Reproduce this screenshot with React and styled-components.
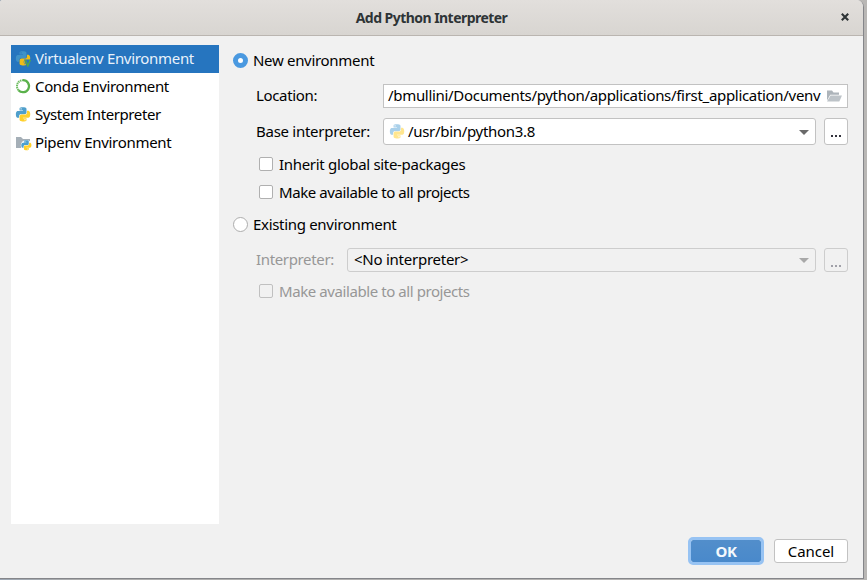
import React from 'react';
import styled, { createGlobalStyle, css } from 'styled-components';

const GlobalStyle = createGlobalStyle`
  * { box-sizing: border-box; }
  body {
    margin: 0;
    overflow: hidden;
    background: #b9b7b5;
    font-family: "Noto Sans", "Open Sans", sans-serif;
    font-size: 15px;
    color: #000;
  }
  svg { display: block; flex: none; }
`;

const Desktop = styled.div`
  width: 867px;
  height: 580px;
  background: linear-gradient(90deg, #9da7b3 0, #aeaeae 78px, #b9b7b5 100%);
`;

const Dialog = styled.div`
  width: 864px;
  height: 579px;
  display: flex;
  flex-direction: column;
  background: #f1f1f1;
  border: solid #85868a;
  border-width: 0 1px 1px 0;
  border-radius: 3px 7px 0 0;
  overflow: hidden;
`;

const TitleBar = styled.header`
  height: 36px;
  flex: none;
  display: grid;
  grid-template-columns: 36px 1fr 36px;
  align-items: center;
  justify-items: center;
  background: linear-gradient(#e2dfdc, #d8d5d1);
  border-bottom: 1px solid #bab5b0;
  color: #2e3436;
`;

const Title = styled.h1`
  grid-column: 2;
  margin: 1px 0 0;
  font-size: 14px;
  line-height: 20px;
  font-weight: 700;
  white-space: nowrap;
  letter-spacing: -0.54px;
`;

const Text = styled.span`
  white-space: nowrap;
  line-height: 20px;
  letter-spacing: ${p => p.$track ?? -0.31}px;
  padding-bottom: ${p => (p.$raised ? 2 : 0)}px;
`;

const Body = styled.main`
  flex: 1;
  display: flex;
  gap: 14px;
  padding: 9px 15px 0 11px;
`;

const EnvList = styled.nav`
  width: 208px;
  flex: none;
  height: 479px;
  background: #fff;
`;

const EnvItem = styled.div`
  height: 28px;
  display: flex;
  align-items: center;
  gap: 3px;
  padding: 0 4px 0 4px;
  ${p => p.$selected && css`background: #2675bf; color: #e9f2fb;`}
`;

const Form = styled.section`
  flex: 1;
  min-width: 0;
  display: flex;
  flex-direction: column;
  padding-top: 5px;
`;

const RadioRow = styled.label`
  height: 22px;
  margin-top: ${p => p.$top || 0}px;
  display: flex;
  align-items: center;
  gap: 5px;
`;

const RadioDot = styled.span`
  width: 15px;
  height: 15px;
  margin-bottom: ${p => (p.$on ? 1 : 0)}px;
  border-radius: 50%;
  border: ${p => (p.$on ? '5px solid #4a99e0' : '1px solid #adadad')};
  background: #fff;
`;

const FieldRow = styled.div`
  height: ${p => p.$h}px;
  margin-top: ${p => p.$top}px;
  display: flex;
  align-items: center;
  padding-left: 23px;
  color: ${p => (p.$off ? '#979797' : 'inherit')};
`;

const FieldLabel = styled.div`
  width: ${p => p.$w}px;
  flex: none;
  display: flex;
`;

const TextField = styled.div`
  flex: 1;
  height: 24px;
  display: flex;
  align-items: center;
  justify-content: space-between;
  padding: 0 5px 0 4px;
  background: #fff;
  border: 1px solid #c2c2c2;
`;

const Combo = styled.div`
  flex: 1;
  height: 100%;
  display: flex;
  align-items: center;
  gap: 2px;
  padding: 0 6px 0 ${p => (p.$off ? 6 : 5)}px;
  border-radius: 3px;
  background: ${p => (p.$off ? '#f1f1f1' : '#fff')};
  border: 1px solid ${p => (p.$off ? '#cdcdcd' : '#c2c2c2')};
  color: #000;
`;

const Arrow = styled.span`
  margin-left: auto;
  margin-top: 1px;
  border: 5px solid transparent;
  border-top-color: ${p => (p.$off ? '#a8a8a8' : '#6a6a6a')};
  border-bottom: 0;
`;

const MoreButton = styled.button`
  width: 24px;
  height: 100%;
  margin-left: 8px;
  padding: ${p => (p.$off ? 11 : 9)}px 0 0;
  display: flex;
  justify-content: center;
  align-items: center;
  gap: 2px;
  border-radius: 3px;
  background: ${p => (p.$off ? '#f1f1f1' : '#fff')};
  border: 1px solid ${p => (p.$off ? '#cdcdcd' : '#c2c2c2')};
  color: ${p => (p.$off ? '#a0a0a8' : '#33333d')};
`;

const Dot = styled.i`
  width: 2px;
  height: 2px;
  background: currentColor;
`;

const CheckRow = styled.label`
  height: 20px;
  margin-top: ${p => p.$top}px;
  padding-left: 26px;
  display: flex;
  align-items: center;
  gap: 6px;
  color: ${p => (p.$off ? '#979797' : 'inherit')};
`;

const Box = styled.span`
  width: 14px;
  height: 14px;
  border-radius: 2px;
  border: 1px solid ${p => (p.$off ? '#c0c0c0' : '#b0b0b0')};
  background: ${p => (p.$off ? '#f1f1f1' : '#fff')};
`;

const Footer = styled.footer`
  height: 42px;
  flex: none;
  display: flex;
  justify-content: flex-end;
  align-items: flex-start;
  gap: 10px;
  padding-right: 15px;
`;

const DialogButton = styled.button`
  width: 74px;
  height: 24px;
  margin-top: 3px;
  padding: 0;
  font: inherit;
  color: #000;
  background: #fff;
  border: 1px solid #c2c2c2;
  border-radius: 3px;
  display: flex;
  align-items: center;
  justify-content: center;
  ${p => p.$primary && css`
    width: 76px;
    height: 28px;
    margin-top: 1px;
    border: 3px solid #97c3f3;
    border-radius: 5px;
    background: linear-gradient(#528ecb, #4989cb) padding-box;
    color: #f4f8fc;
    font-weight: 700;
  `}
`;

const SNAKE = 'M14.25.18l.9.2.73.26.59.3.45.32.34.34.25.34.16.33.1.3.04.26.02.2-.01.13V8.5l-.05.63-.13.55-.21.46-.26.38-.3.31-.33.25-.35.19-.35.14-.33.1-.3.07-.26.04-.21.02H8.77l-.69.05-.59.14-.5.22-.41.27-.33.32-.27.35-.2.36-.15.37-.1.35-.07.32-.04.27-.02.21v3.06H3.17l-.21-.03-.28-.07-.32-.12-.35-.18-.36-.26-.36-.36-.35-.46-.32-.59-.28-.73-.21-.88-.14-1.05-.05-1.23.06-1.22.16-1.04.24-.87.32-.71.36-.57.4-.44.42-.33.42-.24.4-.16.36-.1.32-.05.24-.01h.16l.06.01h8.16v-.83H6.18l-.01-2.75-.02-.37.05-.34.11-.31.17-.28.25-.26.31-.23.38-.2.44-.18.51-.15.58-.12.64-.1.71-.06.77-.04.84-.02 1.27.05zm-6.3 1.98l-.23.33-.08.41.08.41.23.34.33.22.41.09.41-.09.33-.22.23-.34.08-.41-.08-.41-.23-.33-.33-.22-.41-.09-.41.09z';

function Snakes({ blue, yellow, transform }) {
  return (
    <g transform={transform}>
      <path d={SNAKE} fill={blue} />
      <path d={SNAKE} fill={yellow} transform="rotate(180 12 12)" />
    </g>
  );
}

function PythonIcon({ faded, badge }) {
  const blue = faded ? '#a9d0ea' : badge ? '#3f92c8' : '#4f9fcb';
  const yellow = faded ? '#ffe68f' : badge ? '#efbd17' : '#ffd02b';
  return (
    <svg width="17" height="16" viewBox="0 0 17 16">
      <Snakes blue={blue} yellow={yellow} transform="translate(.9 .2) scale(.595)" />
      {badge && (
        <>
          <path d="M9 8.500h8V16h-5z" fill="#2675bf" />
          <path d="M10.300 9l2.500 5.800 2.500-5.800" fill="none" stroke="#4da64d" strokeWidth="1.500" />
        </>
      )}
    </svg>
  );
}

function CondaIcon() {
  return (
    <svg width="17" height="16" viewBox="0 0 17 16">
      <path d="M8 1.200a6 6 0 1 1-4.500 10" fill="none" stroke="#5ab14b" strokeWidth="2.300" />
      <path d="M3.500 11.200A6 6 0 0 1 8 1.200" fill="none" stroke="#6fbd62" strokeWidth="2" strokeDasharray="1.500 .6" />
    </svg>
  );
}

function PipenvIcon() {
  return (
    <svg width="17" height="16" viewBox="0 0 17 16">
      <path d="M1 2h5l2 2h7v9H1z" fill="#a5afb7" />
      <circle cx="11.300" cy="10.400" r="5.500" fill="#fff" />
      <Snakes blue="#4aa0d0" yellow="#ffd02b" transform="translate(6.300 5.200) scale(.42)" />
    </svg>
  );
}

function FolderIcon() {
  return (
    <svg width="16" height="14" viewBox="0 0 16 14">
      <path d="M1 1.500h5l1.500 2H13v2.300H4.200L1 11.500z" fill="#adb4ba" />
      <path d="M4.500 6.500H16L13.300 12.500H1z" fill="#bdc3c8" />
    </svg>
  );
}

function CloseIcon() {
  return (
    <svg width="8" height="10" viewBox="0 0 8 10">
      <path d="M.8.8l6.400 6.400M7.200.8L.8 7.200" stroke="#2e3436" strokeWidth="2.100" />
    </svg>
  );
}

function More({ off }) {
  return <MoreButton $off={off} aria-label="Browse"><Dot /><Dot /><Dot /></MoreButton>;
}

export default function App() {
  return (
    <Desktop>
      <GlobalStyle />
      <Dialog>
        <TitleBar>
          <Title>Add Python Interpreter</Title>
          <CloseIcon />
        </TitleBar>
        <Body>
          <EnvList>
            <EnvItem $selected><PythonIcon badge /><Text $raised>Virtualenv Environment</Text></EnvItem>
            <EnvItem><CondaIcon /><Text $raised $track={-0.35}>Conda Environment</Text></EnvItem>
            <EnvItem><PythonIcon /><Text $raised $track={-0.4}>System Interpreter</Text></EnvItem>
            <EnvItem><PipenvIcon /><Text $raised>Pipenv Environment</Text></EnvItem>
          </EnvList>
          <Form>
            <RadioRow><RadioDot $on /><Text $raised>New environment</Text></RadioRow>
            <FieldRow $h={24} $top={12}>
              <FieldLabel $w={127}><Text $raised $track={-0.35}>Location:</Text></FieldLabel>
              <TextField>
                <Text $raised>/bmullini/Documents/python/applications/first_application/venv</Text>
                <FolderIcon />
              </TextField>
            </FieldRow>
            <FieldRow $h={27} $top={10}>
              <FieldLabel $w={127}><Text $raised $track={-0.27}>Base interpreter:</Text></FieldLabel>
              <Combo>
                <PythonIcon faded />
                <Text $raised>/usr/bin/python3.8</Text>
                <Arrow />
              </Combo>
              <More />
            </FieldRow>
            <CheckRow $top={9}><Box /><Text>Inherit global site-packages</Text></CheckRow>
            <CheckRow $top={8}><Box /><Text $track={-0.42}>Make available to all projects</Text></CheckRow>
            <RadioRow $top={11}><RadioDot /><Text>Existing environment</Text></RadioRow>
            <FieldRow $h={24} $top={13} $off>
              <FieldLabel $w={91}><Text $raised $track={-0.35}>Interpreter:</Text></FieldLabel>
              <Combo $off><Text $raised $track={-0.25}>&lt;No interpreter&gt;</Text><Arrow $off /></Combo>
              <More off />
            </FieldRow>
            <CheckRow $top={9} $off><Box $off /><Text $track={-0.42}>Make available to all projects</Text></CheckRow>
          </Form>
        </Body>
        <Footer>
          <DialogButton $primary><Text $track={-0.3}>OK</Text></DialogButton>
          <DialogButton><Text $track={-0.05}>Cancel</Text></DialogButton>
        </Footer>
      </Dialog>
    </Desktop>
  );
}
